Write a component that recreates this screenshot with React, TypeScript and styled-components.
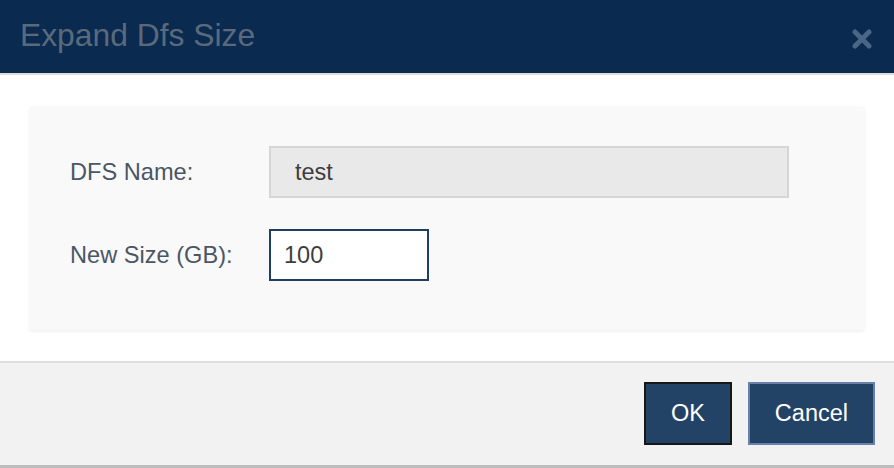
import React from 'react';
import styled, { createGlobalStyle } from 'styled-components';

const GlobalStyle = createGlobalStyle`
  html, body {
    margin: 0;
    padding: 0;
    background: #ffffff;
    font-family: 'Liberation Sans', Arial, sans-serif;
  }
`;

const Dialog = styled.div`
  display: flex;
  flex-direction: column;
  width: 894px;
  height: 468px;
  box-sizing: border-box;
  border-bottom: 3px solid #bdbdbd;
  background: #ffffff;
`;

const Header = styled.div`
  display: flex;
  align-items: center;
  justify-content: space-between;
  height: 75px;
  padding: 0 20px;
  box-sizing: border-box;
  background: #0a2a4f;
  border-bottom: 2px solid #dcdcdc;
`;

const Title = styled.h1`
  margin: 0;
  padding-bottom: 2px;
  font-size: 31.8px;
  font-weight: 400;
  color: #5a6a7c;
`;

const CloseButton = styled.button`
  display: flex;
  align-items: center;
  justify-content: center;
  width: 24px;
  height: 24px;
  margin-top: 4px;
  padding: 0;
  border: none;
  background: none;
  cursor: pointer;
`;

const Body = styled.div`
  flex: 1;
  padding: 31px 29px 29px 29px;
`;

const Card = styled.div`
  display: flex;
  flex-direction: column;
  gap: 31px;
  padding: 40px 40px 49px 41px;
  background: #f9f9f9;
  border-radius: 4px;
  box-shadow: 0 2px 3px rgba(0, 0, 0, 0.06);
`;

const Row = styled.div`
  display: flex;
  align-items: center;
`;

const Label = styled.label`
  width: 199px;
  font-size: 23.6px;
  color: #4b5664;
`;

const Field = styled.input<{ $readOnly?: boolean; $width: number }>`
  box-sizing: border-box;
  width: ${p => p.$width}px;
  height: 52px;
  padding: 0 ${p => (p.$readOnly ? 24 : 13)}px;
  font-family: 'Liberation Sans', Arial, sans-serif;
  font-size: 23.5px;
  color: #3e3e3e;
  background: ${p => (p.$readOnly ? '#e9e9e9' : '#ffffff')};
  border: 2px solid ${p => (p.$readOnly ? '#d6d6d6' : '#1f3f61')};
  border-radius: 0;
  outline: none;
`;

const Footer = styled.div`
  display: flex;
  align-items: center;
  justify-content: flex-end;
  gap: 16px;
  height: 104px;
  padding: 0 19px 2px 0;
  box-sizing: border-box;
  background: #f2f2f2;
  border-top: 2px solid #dedede;
`;

const Button = styled.button<{ $focused?: boolean }>`
  height: 63px;
  padding: 0 25px;
  font-family: 'Liberation Sans', Arial, sans-serif;
  font-size: 23.5px;
  color: #ffffff;
  background: #234366;
  border: 2px solid ${p => (p.$focused ? '#171717' : '#6b80a8')};
  cursor: pointer;
`;

const App = () => {
  return (
    <Dialog>
      <GlobalStyle />
      <Header>
        <Title>Expand Dfs Size</Title>
        <CloseButton aria-label="close">
          <svg width="20" height="20" viewBox="0 0 20 20">
            <path
              d="M3 3 L17 17 M17 3 L3 17"
              stroke="#4a6586"
              strokeWidth="5"
              strokeLinecap="round"
            />
          </svg>
        </CloseButton>
      </Header>
      <Body>
        <Card>
          <Row>
            <Label>DFS Name:</Label>
            <Field $readOnly $width={520} value="test" readOnly />
          </Row>
          <Row>
            <Label>New Size (GB):</Label>
            <Field $width={160} defaultValue="100" />
          </Row>
        </Card>
      </Body>
      <Footer>
        <Button $focused>OK</Button>
        <Button>Cancel</Button>
      </Footer>
    </Dialog>
  );
};

export default App;
